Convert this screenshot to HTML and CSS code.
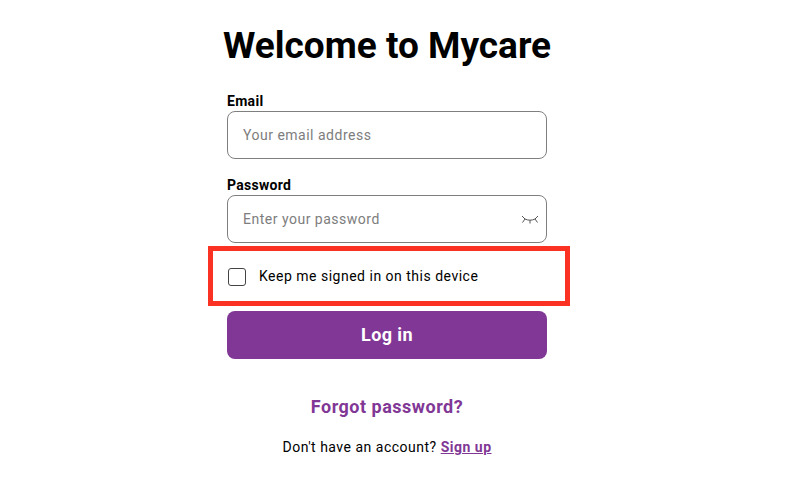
FILE: index.html
```html
<!DOCTYPE html>
<html lang="en">
<head>
    <meta charset="UTF-8">
    <meta name="viewport" content="width=device-width, initial-scale=1.0">
    <title>Welcome to Mycare</title>
    <link rel="stylesheet" href="styles.css">
</head>
<body>
    <div class="container">
        <h1>Welcome to Mycare</h1>

        <form class="login-form">
            <div class="form-group">
                <label for="email">Email</label>
                <input type="email" id="email" class="field" placeholder="Your email address">
            </div>

            <div class="form-group password-group">
                <label for="password">Password</label>
                <div class="password-wrap">
                    <input type="password" id="password" class="field" placeholder="Enter your password">
                    <svg class="eye-icon" width="18" height="10" viewBox="0 0 18 10" fill="none" stroke="#555" stroke-width="1">
                        <path d="M1 1 L4 4 C7 5.6, 11 5.6, 14 4 L17 1"/>
                        <path d="M4 4 L1.5 7.5"/>
                        <path d="M9 5.2 L9 8.5"/>
                        <path d="M14 4 L16.5 7.5"/>
                    </svg>
                </div>
            </div>

            <div class="keep-signed">
                <label class="keep-label">
                    <input type="checkbox" id="keepSigned">
                    <span>Keep me signed in on this device</span>
                </label>
            </div>

            <button type="button" class="btn">Log in</button>
        </form>

        <a href="#" class="forgot">Forgot password?</a>
        <p class="signup">Don't have an account? <a href="#">Sign up</a></p>
    </div>
</body>
</html>
```

FILE: styles.css
```css
:root {
    --primary-color: #813795;
    --border-color: #7f7f7f;
}

* {
    margin: 0;
    padding: 0;
    box-sizing: border-box;
    font-family: Roboto, "Liberation Sans", sans-serif;
}

body {
    background-color: white;
    color: black;
    overflow: hidden;
}

.container {
    width: 320px;
    margin-left: 227px;
    display: flex;
    flex-direction: column;
    align-items: center;
}

h1 {
    font-size: 37px;
    font-weight: 700;
    line-height: 42px;
    margin-top: 25px;
    white-space: nowrap;
}

.login-form {
    width: 100%;
    margin-top: 26px;
}

.form-group {
    margin-bottom: 18px;
}

.form-group label {
    display: block;
    font-size: 14px;
    font-weight: 700;
    line-height: 16px;
    letter-spacing: 0.3px;
    margin-bottom: 2px;
}

.field {
    display: block;
    width: 100%;
    height: 48px;
    padding: 0 15px;
    border: 1px solid var(--border-color);
    border-radius: 8px;
    font-size: 14px;
    letter-spacing: 0.5px;
    outline: none;
}

.field::placeholder {
    color: #7d7d7d;
    opacity: 1;
}

.password-group {
    margin-bottom: 0;
}

.password-wrap {
    position: relative;
}

.eye-icon {
    position: absolute;
    right: 8px;
    top: 20px;
}

.keep-signed {
    position: relative;
    height: 68px;
    display: flex;
    align-items: center;
}

.keep-label {
    display: flex;
    align-items: center;
    gap: 13px;
    font-size: 14px;
    letter-spacing: 0.5px;
    line-height: 16px;
}

.keep-label span {
    padding-bottom: 2px;
}

.keep-label input {
    appearance: none;
    width: 18px;
    height: 18px;
    margin-left: 1px;
    border: 1px solid #444;
    border-radius: 3px;
    background-color: white;
}

/* annotation drawn over the screenshot */
.keep-signed::after {
    content: "";
    position: absolute;
    box-sizing: border-box;
    left: -19px;
    top: 3px;
    width: 362px;
    height: 60px;
    border: 5px solid #fb3223;
    pointer-events: none;
}

.btn {
    display: block;
    width: 100%;
    height: 48px;
    padding-bottom: 2px;
    background-color: var(--primary-color);
    color: white;
    border: none;
    border-radius: 8px;
    font-size: 18px;
    font-weight: 700;
    letter-spacing: 0.4px;
    cursor: pointer;
}

.forgot {
    margin-top: 37px;
    font-size: 18px;
    line-height: 21px;
    font-weight: 700;
    letter-spacing: 0.5px;
    color: var(--primary-color);
    text-decoration: none;
}

.signup {
    margin-top: 22px;
    font-size: 14px;
    line-height: 16px;
    letter-spacing: 0.5px;
}

.signup a {
    font-weight: 700;
    color: var(--primary-color);
}
```
